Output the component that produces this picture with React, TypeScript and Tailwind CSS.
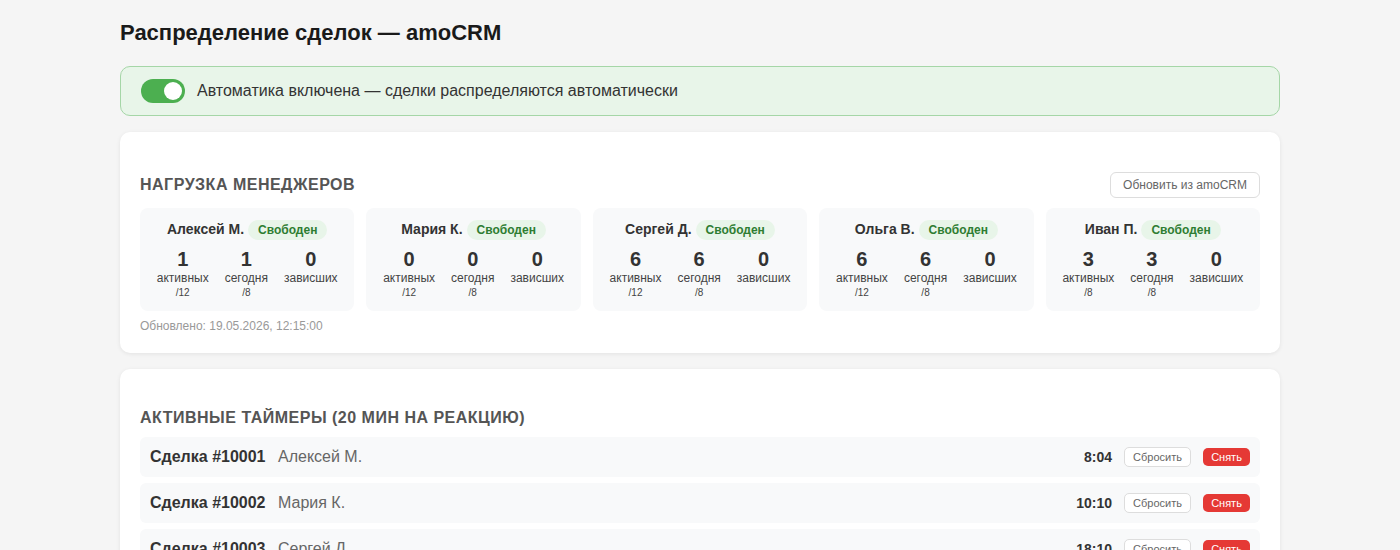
const managers = [
  { name: "Алексей М.", a: 1, t: 1, s: 0, al: "/12", tl: "/8" },
  { name: "Мария К.", a: 0, t: 0, s: 0, al: "/12", tl: "/8" },
  { name: "Сергей Д.", a: 6, t: 6, s: 0, al: "/12", tl: "/8" },
  { name: "Ольга В.", a: 6, t: 6, s: 0, al: "/12", tl: "/8" },
  { name: "Иван П.", a: 3, t: 3, s: 0, al: "/8", tl: "/8" },
];
const timers = [
  { id: "Сделка #10001", name: "Алексей М.", time: "8:04" },
  { id: "Сделка #10002", name: "Мария К.", time: "10:10" },
  { id: "Сделка #10003", name: "Сергей Д.", time: "18:10" },
];

function Stat({ value, label, limit }: { value: number; label: string; limit?: string }) {
  return (
    <div className="flex flex-col items-center">
      <div className="text-[20px] font-bold leading-[23px] text-[#333]">{value}</div>
      <div className="text-[12px] leading-[14px] text-[#444]">{label}</div>
      {limit && <div className="text-[10px] leading-[12px] mt-[2px] text-[#444]">{limit}</div>}
    </div>
  );
}

export default function App() {
  return (
    <div className="h-[550px] overflow-hidden bg-[#f5f5f5] font-['Liberation_Sans',Arial,sans-serif] text-[#333]">
      <div className="w-[1160px] mx-auto pt-[20px]">
        <h1 className="text-[22px] leading-[25px] font-bold text-[#1a1a1a] mb-[21px]">Распределение сделок — amoCRM</h1>
        <div className="flex items-center gap-[12px] h-[50px] px-[20px] rounded-[10px] border border-[#a5d6a7] bg-[#e8f5e9] mb-[16px]">
          <div className="relative w-[44px] h-[24px] rounded-full bg-[#4caf50]">
            <div className="absolute right-[3px] top-[3px] w-[18px] h-[18px] rounded-full bg-white" />
          </div>
          <span className="text-[16px] text-[#333]">Автоматика включена — сделки распределяются автоматически</span>
        </div>

        <section className="bg-white rounded-[10px] shadow-[0_1px_4px_rgba(0,0,0,0.08)] px-[20px] pt-[40px] pb-[20px] mb-[16px]">
          <div className="flex items-center justify-between mb-[10px]">
            <h2 className="text-[16px] font-bold uppercase tracking-[0.5px] text-[#555]">Нагрузка менеджеров</h2>
            <button className="h-[26px] px-[12px] rounded-[6px] border border-[#ddd] bg-white text-[12px] text-[#666]">Обновить из amoCRM</button>
          </div>
          <div className="grid grid-cols-5 gap-[12px]">
            {managers.map((m) => (
              <div key={m.name} className="h-[103px] rounded-[8px] bg-[#f8f9fa] pt-[12px] flex flex-col items-center">
                <div className="flex items-center gap-[4px] h-[20px]">
                  <span className="text-[14px] font-bold text-[#333] mb-[2px]">{m.name}</span>
                  <span className="h-[20px] leading-[20px] px-[10px] rounded-full bg-[#e8f5e9] text-[#2e7d32] text-[12px] font-bold">Свободен</span>
                </div>
                <div className="flex justify-center gap-[16px] mt-[8px]">
                  <Stat value={m.a} label="активных" limit={m.al} />
                  <Stat value={m.t} label="сегодня" limit={m.tl} />
                  <Stat value={m.s} label="зависших" />
                </div>
              </div>
            ))}
          </div>
          <div className="text-[12px] leading-[14px] text-[#999] mt-[8px]">Обновлено: 19.05.2026, 12:15:00</div>
        </section>

        <section className="bg-white rounded-[10px] shadow-[0_1px_4px_rgba(0,0,0,0.08)] px-[20px] pt-[40px] pb-[20px]">
          <h2 className="text-[16px] leading-[18px] font-bold uppercase tracking-[0.5px] text-[#555] mb-[10px]">Активные таймеры (20 мин на реакцию)</h2>
          <div className="flex flex-col gap-[6px]">
            {timers.map((t) => (
              <div key={t.id} className="flex items-center h-[40px] px-[10px] rounded-[6px] bg-[#f8f9fa]">
                <span className="text-[16px] font-bold text-[#333] w-[116px]">{t.id}</span>
                <span className="text-[16px] text-[#666] ml-[12px]">{t.name}</span>
                <span className="ml-auto text-[14px] font-bold text-[#333]">{t.time}</span>
                <button className="ml-[12px] h-[20px] w-[67px] rounded-[5px] border border-[#ddd] bg-white text-[11px] text-[#666]">Сбросить</button>
                <button className="ml-[12px] h-[18px] w-[47px] rounded-[5px] bg-[#e53935] text-[11px] text-white">Снять</button>
              </div>
            ))}
          </div>
        </section>
      </div>
    </div>
  );
}
